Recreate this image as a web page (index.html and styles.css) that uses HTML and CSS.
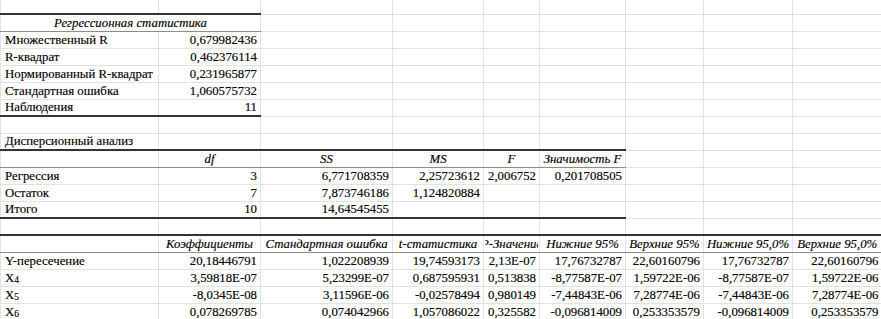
FILE: index.html
```html
<!DOCTYPE html>
<html lang="ru">
<head>
<meta charset="utf-8">
<link rel="stylesheet" href="styles.css">
</head>
<body>
<table class="sheet">
  <colgroup>
    <col class="c-a"><col class="c-b"><col class="c-c"><col class="c-d"><col class="c-e"><col class="c-f"><col class="c-g"><col class="c-h"><col class="c-i">
  </colgroup>
  <tbody>
    <tr class="first"><td></td><td></td><td></td><td></td><td></td><td></td><td></td><td></td><td></td></tr>
    <tr><td colspan="2" class="hd top"><div class="ctr">Регрессионная статистика</div></td><td></td><td></td><td></td><td></td><td></td><td></td><td></td></tr>
    <tr><td>Множественный R</td><td class="n">0,679982436</td><td></td><td></td><td></td><td></td><td></td><td></td><td></td></tr>
    <tr><td>R-квадрат</td><td class="n">0,462376114</td><td></td><td></td><td></td><td></td><td></td><td></td><td></td></tr>
    <tr><td>Нормированный R-квадрат</td><td class="n">0,231965877</td><td></td><td></td><td></td><td></td><td></td><td></td><td></td></tr>
    <tr><td>Стандартная ошибка</td><td class="n">1,060575732</td><td></td><td></td><td></td><td></td><td></td><td></td><td></td></tr>
    <tr><td class="bot">Наблюдения</td><td class="n bot">11</td><td></td><td></td><td></td><td></td><td></td><td></td><td></td></tr>
    <tr><td></td><td></td><td></td><td></td><td></td><td></td><td></td><td></td><td></td></tr>
    <tr><td class="bot">Дисперсионный анализ</td><td class="bot"></td><td class="bot"></td><td class="bot"></td><td class="bot"></td><td class="bot"></td><td></td><td></td><td></td></tr>
    <tr><td class="hd"></td><td class="hd"><div class="ctr">df</div></td><td class="hd"><div class="ctr">SS</div></td><td class="hd"><div class="ctr">MS</div></td><td class="hd"><div class="ctr">F</div></td><td class="hd"><div class="ctr">Значимость F</div></td><td></td><td></td><td></td></tr>
    <tr><td>Регрессия</td><td class="n">3</td><td class="n">6,771708359</td><td class="n">2,25723612</td><td class="n">2,006752</td><td class="n">0,201708505</td><td></td><td></td><td></td></tr>
    <tr><td>Остаток</td><td class="n">7</td><td class="n">7,873746186</td><td class="n">1,124820884</td><td></td><td></td><td></td><td></td><td></td></tr>
    <tr><td class="bot">Итого</td><td class="n bot">10</td><td class="n bot">14,64545455</td><td class="bot"></td><td class="bot"></td><td class="bot"></td><td></td><td></td><td></td></tr>
    <tr><td></td><td></td><td></td><td></td><td></td><td></td><td></td><td></td><td></td></tr>
    <tr>
      <td class="hd top"></td>
      <td class="hd top"><div class="ctr">Коэффициенты</div></td>
      <td class="hd top"><div class="ctr">Стандартная ошибка</div></td>
      <td class="hd top"><div class="ctr">t-статистика</div></td>
      <td class="hd top"><div class="ctr">Р-Значение</div></td>
      <td class="hd top"><div class="ctr">Нижние 95%</div></td>
      <td class="hd top"><div class="ctr">Верхние 95%</div></td>
      <td class="hd top"><div class="ctr">Нижние 95,0%</div></td>
      <td class="hd top"><div class="ctr">Верхние 95,0%</div></td>
    </tr>
    <tr><td>Y-пересечение</td><td class="n">20,18446791</td><td class="n">1,022208939</td><td class="n">19,74593173</td><td class="n">2,13E-07</td><td class="n">17,76732787</td><td class="n">22,60160796</td><td class="n">17,76732787</td><td class="n">22,60160796</td></tr>
    <tr><td>X<span class="sub">4</span></td><td class="n">3,59818E-07</td><td class="n">5,23299E-07</td><td class="n">0,687595931</td><td class="n">0,513838</td><td class="n">-8,77587E-07</td><td class="n">1,59722E-06</td><td class="n">-8,77587E-07</td><td class="n">1,59722E-06</td></tr>
    <tr><td>X<span class="sub">5</span></td><td class="n">-8,0345E-08</td><td class="n">3,11596E-06</td><td class="n">-0,02578494</td><td class="n">0,980149</td><td class="n">-7,44843E-06</td><td class="n">7,28774E-06</td><td class="n">-7,44843E-06</td><td class="n">7,28774E-06</td></tr>
    <tr><td>X<span class="sub">6</span></td><td class="n">0,078269785</td><td class="n">0,074042966</td><td class="n">1,057086022</td><td class="n">0,325582</td><td class="n">-0,096814009</td><td class="n">0,253353579</td><td class="n">-0,096814009</td><td class="n">0,253353579</td></tr>
  </tbody>
</table>
</body>
</html>
```

FILE: styles.css
```css
html, body {
  margin: 0;
  padding: 0;
  background: #ffffff;
  overflow: hidden;
}

.sheet {
  border-collapse: collapse;
  table-layout: fixed;
  width: 881px;
  font-family: "Liberation Serif", "Times New Roman", serif;
  font-size: 12.8px;
  color: #000;
  -webkit-text-stroke: 0.15px #000;
}

.c-a { width: 158px; }
.c-b { width: 102px; }
.c-c { width: 132px; }
.c-d { width: 91px; }
.c-e { width: 56px; }
.c-f { width: 86px; }
.c-g { width: 78px; }
.c-h { width: 89px; }
.c-i { width: 89px; }

.sheet tr { height: 17px; }
.sheet tr.first { height: 14px; }

.sheet td {
  border-right: 1px solid #e2e2e2;
  border-bottom: 1px solid #e2e2e2;
  padding: 0 3px 0 4px;
  line-height: 15px;
  vertical-align: bottom;
  white-space: nowrap;
  overflow: hidden;
}

.sheet td:first-child {
  border-left: 1px solid #e2e2e2;
}

.sheet td:last-child {
  border-right: none;
}

.sheet td.n {
  text-align: right;
  padding-right: 3px;
}

.sheet td.hd {
  font-style: italic;
  border-bottom: 1px solid #8c8c8c;
  padding: 0 1px;
}

.sheet td.top {
  border-top: 2px solid #333333;
}

.sheet td.bot {
  border-bottom: 2px solid #333333;
}

.ctr {
  display: flex;
  justify-content: center;
  overflow: hidden;
  white-space: nowrap;
}

.sub {
  font-size: 9.5px;
  line-height: 0;
  vertical-align: -1px;
}
```
